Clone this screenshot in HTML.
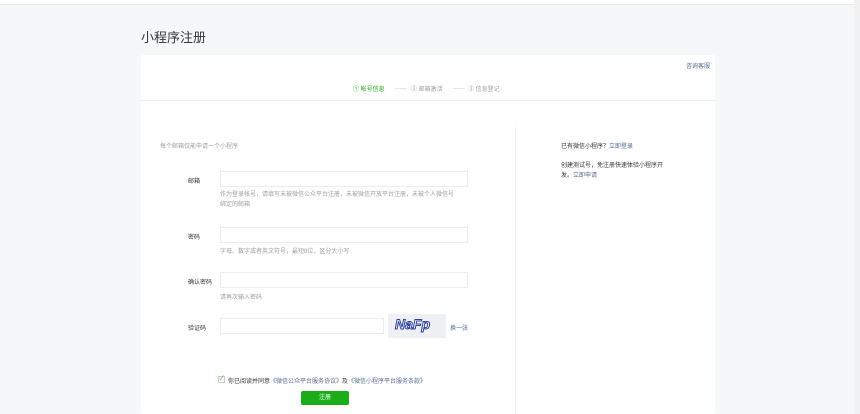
<!DOCTYPE html>
<html><head><meta charset="utf-8"><style>
*{margin:0;padding:0;box-sizing:border-box}
html,body{width:860px;height:414px;overflow:hidden}
body{background:#f6f7f9;font-family:"Liberation Sans","Noto Sans CJK SC",sans-serif;position:relative;color:#353535}
.a{position:absolute;white-space:nowrap}
.top{left:0;top:0;width:860px;height:5px;background:#fff;border-bottom:1px solid #e7e7eb}
.sb{left:854px;top:0;width:6px;height:414px;background:#f1f1f1}
.card{left:141px;top:55px;width:574px;height:359px;background:#fff;border-radius:2px}
.s{font-size:6px}
.g{color:#a0a0a0}
.l{color:#576b95}
.in{background:#fff;border:1px solid #ececec;height:16px}
</style></head><body>
<div class="a top"></div>
<div class="a sb"></div>
<div class="a" style="left:141px;top:27px;font-size:13px;color:#353535">小程序注册</div>
<div class="a card"></div>
<div class="a s l" style="left:686px;top:61px">咨询客服</div>
<div class="a s" style="left:353px;top:84px;color:#1aad19">① 帐号信息</div>
<div class="a" style="left:395px;top:88px;width:12px;border-top:1px solid #e7e7eb"></div>
<div class="a s g" style="left:411px;top:84px">② 邮箱激活</div>
<div class="a" style="left:453px;top:88px;width:12px;border-top:1px solid #e7e7eb"></div>
<div class="a s g" style="left:468px;top:84px">③ 信息登记</div>
<div class="a" style="left:141px;top:100px;width:574px;border-top:1px solid #eeeeee"></div>
<div class="a" style="left:515px;top:127px;height:290px;border-left:1px solid #eeeeee"></div>
<div class="a s g" style="left:160px;top:141px">每个邮箱仅能申请一个小程序</div>
<div class="a s" style="left:188px;top:176px">邮箱</div>
<div class="a in" style="left:220px;top:171px;width:248px"></div>
<div class="a s g" style="left:220px;top:190px;line-height:10px">作为登录帐号，请填写未被微信公众平台注册，未被微信开放平台注册，未被个人微信号<br>绑定的邮箱</div>
<div class="a s" style="left:188px;top:232px">密码</div>
<div class="a in" style="left:220px;top:227px;width:248px"></div>
<div class="a s g" style="left:220px;top:246px">字母、数字或者英文符号，最短8位，区分大小写</div>
<div class="a s" style="left:188px;top:277px">确认密码</div>
<div class="a in" style="left:220px;top:272px;width:248px"></div>
<div class="a s g" style="left:220px;top:292px">请再次输入密码</div>
<div class="a s" style="left:188px;top:323px">验证码</div>
<div class="a in" style="left:220px;top:318px;width:164px"></div>
<div class="a" style="left:388px;top:314px;width:58px;height:24px;background:#eef0f3"></div>
<div class="a" style="left:395px;top:316px;font-size:14px;font-weight:bold;color:#fff;-webkit-text-stroke:1px #2a3fa0;font-style:italic">NaFp</div>
<div class="a s l" style="left:450px;top:323px">换一张</div>
<div class="a" style="left:218px;top:376px;width:7px;height:7px;border:1px solid #ccc;font-size:6px;color:#1aad19;line-height:5px;text-align:center">✓</div>
<div class="a s" style="left:228px;top:376px">你已阅读并同意<span class="l">《微信公众平台服务协议》</span>及<span class="l">《微信小程序平台服务条款》</span></div>
<div class="a" style="left:301px;top:391px;width:48px;height:14px;background:#1aad19;border-radius:2px;color:#fff;font-size:6px;text-align:center;line-height:14px">注册</div>
<div class="a s" style="left:561px;top:141px">已有微信小程序？<span class="l">立即登录</span></div>
<div class="a s" style="left:561px;top:161px;line-height:10px">创建测试号，免注册快速体验小程序开<br>发。<span class="l">立即申请</span></div>
</body></html>
